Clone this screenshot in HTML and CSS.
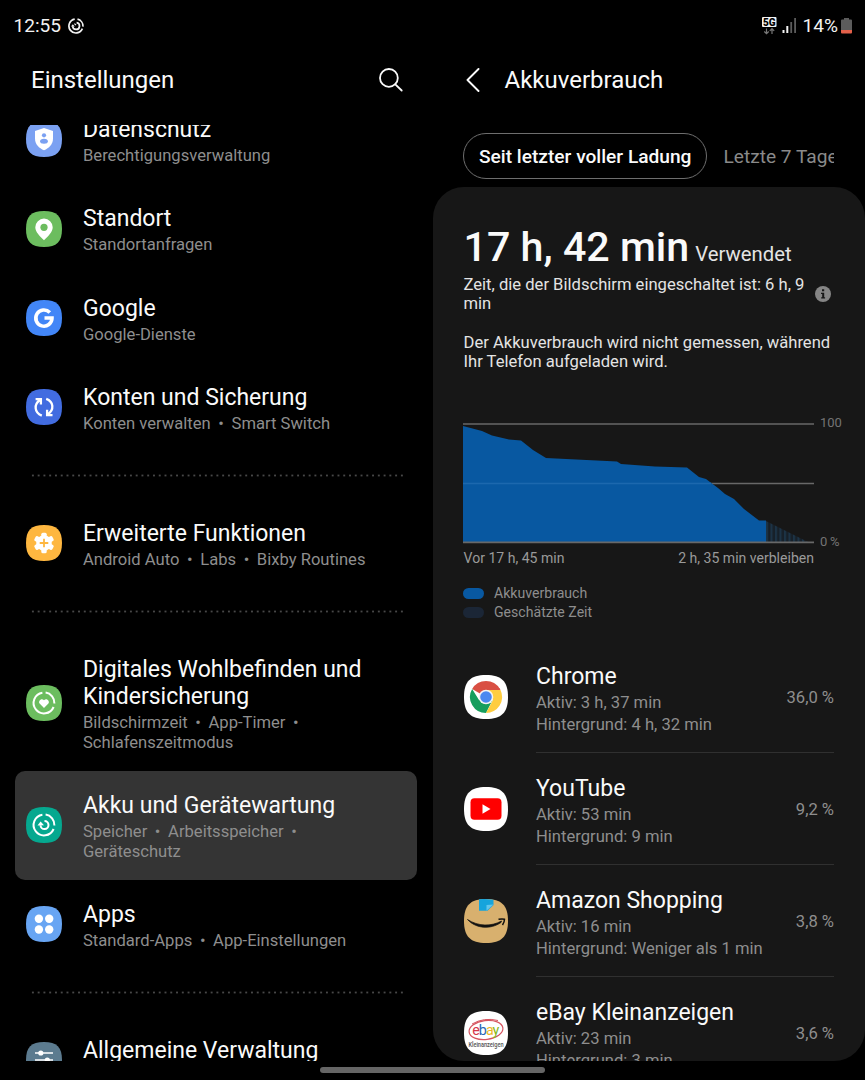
FILE: index.html
```html
<!DOCTYPE html>
<html lang="de">
<head>
    <meta charset="UTF-8">
    <meta name="viewport" content="width=device-width, initial-scale=1.0">
    <title>Einstellungen</title>
    <link rel="stylesheet" href="styles.css">
</head>
<body>
    <!-- Shared icon background -->
    <svg class="defs" width="0" height="0">
        <symbol id="squircle" viewBox="0 0 36 36">
            <path d="M18 0C30.800 0 36 5.200 36 18S30.800 36 18 36 0 30.800 0 18 5.200 0 18 0Z"/>
        </symbol>
    </svg>

    <div class="status-bar">
        <div class="status-left">
            <span>12:55</span>
            <svg width="16" height="16" viewBox="0 0 16 16" fill="none" stroke="#f2f2f2" stroke-width="1.700">
                <path d="M9.500 1.200A7 7 0 0 1 14.900 8.600M14.400 10.700A7 7 0 1 1 6.700 1.100"/>
                <path d="M8.600 4.700A3.400 3.400 0 1 1 4.700 8.200"/>
                <path d="M3 8.600L4.800 6.300 6.800 8.500Z" fill="#f2f2f2" stroke="none"/>
                <path d="M6.400 5.600L8 7.200" stroke-width="1.200"/>
            </svg>
        </div>
        <div class="status-right">
            <svg width="15" height="18" viewBox="0 0 15 18">
                <rect width="14.500" height="10" rx="1" fill="#f2f2f2"/>
                <text x="7.300" y="8.600" text-anchor="middle" class="net-label">5G</text>
                <path d="M4.500 11.500v5M2.300 14.500l2.200 2.200 2.200-2.200M10 17v-5M7.800 13.900L10 11.700l2.200 2.200" fill="none" stroke="#777" stroke-width="1.200"/>
            </svg>
            <svg width="15" height="16" viewBox="0 0 15 16">
                <rect x="0.500" y="12" width="2" height="3" fill="#f2f2f2"/>
                <rect x="4.300" y="8" width="2" height="7" fill="#f2f2f2"/>
                <rect x="8.300" y="4" width="1.800" height="11" fill="#5c5c5c"/>
                <rect x="12.200" y="0" width="1.800" height="15" fill="#5c5c5c"/>
            </svg>
            <span class="percent">14%</span>
            <svg width="11" height="16" viewBox="0 0 11 16">
                <path d="M3 0h5v1.500h2q1 0 1 1V12H0V2.500q0-1 1-1h2Z" fill="#5c5c5c"/>
                <path d="M0 12h11v2.500q0 1-1 1H1q-1 0-1-1Z" fill="#e2604a"/>
            </svg>
        </div>
    </div>

    <div class="panes">
        <div class="settings">
            <header class="settings-header">
                <h1>Einstellungen</h1>
                <svg width="24" height="24" viewBox="0 0 24 24" fill="none" stroke="#fafafa" stroke-width="1.800" stroke-linecap="round">
                    <circle cx="9.900" cy="9.900" r="8.900"/>
                    <path d="M16.300 16.300L22.700 22.500"/>
                </svg>
            </header>

            <div class="settings-list">
                <div class="item first">
                    <svg class="icon" viewBox="0 0 36 36">
                        <use href="#squircle" fill="#7ba1f2"/>
                        <path d="M18 7L27 10V17.500C27 23.500 23 27 18 29.300 13 27 9 23.500 9 17.500V10Z" fill="#fff"/>
                        <circle cx="18" cy="14.300" r="2.100" fill="#7ba1f2"/>
                        <ellipse cx="18" cy="20.300" rx="3.900" ry="2.500" fill="#7ba1f2"/>
                    </svg>
                    <div class="text">
                        <div class="title">Datenschutz</div>
                        <div class="sub">Berechtigungsverwaltung</div>
                    </div>
                </div>
                <div class="item">
                    <svg class="icon" viewBox="0 0 36 36">
                        <use href="#squircle" fill="#6cbd5f"/>
                        <path d="M18 7.600A8.700 8.700 0 0 1 26.700 16.300C26.700 21 22 25.500 18 29.300 14 25.500 9.300 21 9.300 16.300A8.700 8.700 0 0 1 18 7.600Z" fill="#fff"/>
                        <circle cx="18" cy="16.300" r="3.600" fill="#6cbd5f"/>
                    </svg>
                    <div class="text">
                        <div class="title">Standort</div>
                        <div class="sub">Standortanfragen</div>
                    </div>
                </div>
                <div class="item">
                    <svg class="icon" viewBox="0 0 36 36">
                        <use href="#squircle" fill="#4286f7"/>
                        <path d="M23.800 12.500A8.100 8.100 0 1 0 26 18H18.500" fill="none" stroke="#fff" stroke-width="3.600"/>
                    </svg>
                    <div class="text">
                        <div class="title">Google</div>
                        <div class="sub">Google-Dienste</div>
                    </div>
                </div>
                <div class="item">
                    <svg class="icon" viewBox="0 0 36 36">
                        <use href="#squircle" fill="#426ce0"/>
                        <g fill="none" stroke="#fff" stroke-width="2.300">
                            <path d="M15.800 26.600C8.500 23.500 7.200 15.500 14.600 10.500M9.600 10.100H14.900V15.400"/>
                            <path d="M20.200 9.800C27.500 12.500 28.800 20.500 21.400 25.700M26.500 26.100H21.100V20.700"/>
                        </g>
                    </svg>
                    <div class="text">
                        <div class="title">Konten und Sicherung</div>
                        <div class="sub">Konten verwalten<i>•</i>Smart Switch</div>
                    </div>
                </div>
                <div class="divider"></div>
                <div class="item">
                    <svg class="icon" viewBox="0 0 36 36">
                        <use href="#squircle" fill="#feb740"/>
                        <g fill="#fff">
                            <circle cx="18" cy="18" r="7.800"/>
                            <rect x="15.300" y="7.700" width="5.400" height="20.600" rx="1.500"/>
                            <rect x="15.300" y="7.700" width="5.400" height="20.600" rx="1.500" transform="rotate(60 18 18)"/>
                            <rect x="15.300" y="7.700" width="5.400" height="20.600" rx="1.500" transform="rotate(120 18 18)"/>
                        </g>
                        <path d="M18 13.700v8.600M13.700 18h8.600" stroke="#feb740" stroke-width="1.800"/>
                    </svg>
                    <div class="text">
                        <div class="title">Erweiterte Funktionen</div>
                        <div class="sub">Android Auto<i>•</i>Labs<i>•</i>Bixby Routines</div>
                    </div>
                </div>
                <div class="divider"></div>
                <div class="item">
                    <svg class="icon" viewBox="0 0 36 36">
                        <use href="#squircle" fill="#6cbd5f"/>
                        <path d="M19.600 7.600A10.400 10.400 0 0 1 28.400 18.500M27.600 22A10.400 10.400 0 1 1 16.400 7.700" fill="none" stroke="#fff" stroke-width="2"/>
                        <path d="M18 23L13.600 18.600C11.800 16.500 15.300 12.300 18 15.300 20.700 12.300 24.200 16.500 22.400 18.600Z" fill="#fff"/>
                    </svg>
                    <div class="text">
                        <div class="title">Digitales Wohlbefinden und<br>Kindersicherung</div>
                        <div class="sub">Bildschirmzeit<i>•</i>App-Timer<i>•</i><br>Schlafenszeitmodus</div>
                    </div>
                </div>
                <div class="item active">
                    <svg class="icon" viewBox="0 0 36 36">
                        <use href="#squircle" fill="#05a88f"/>
                        <g fill="none" stroke="#fff" stroke-width="2">
                            <path d="M19.600 7.600A10.400 10.400 0 0 1 28.400 18.500M27.600 22A10.400 10.400 0 1 1 16.400 7.700"/>
                            <path d="M18.500 14A4 4 0 1 1 14.500 18.200"/>
                        </g>
                        <path d="M11.500 18.600L14.600 14.500 18 18.200Z" fill="#fff"/>
                    </svg>
                    <div class="text">
                        <div class="title">Akku und Gerätewartung</div>
                        <div class="sub">Speicher<i>•</i>Arbeitsspeicher<i>•</i><br>Geräteschutz</div>
                    </div>
                </div>
                <div class="item">
                    <svg class="icon" viewBox="0 0 36 36">
                        <use href="#squircle" fill="#68a5f3"/>
                        <g fill="#fff">
                            <circle cx="12.900" cy="12.800" r="4.200"/>
                            <circle cx="23.200" cy="12.800" r="4.200"/>
                            <circle cx="12.900" cy="23.500" r="4.200"/>
                            <circle cx="23.200" cy="23.500" r="4.200"/>
                        </g>
                    </svg>
                    <div class="text">
                        <div class="title">Apps</div>
                        <div class="sub">Standard-Apps<i>•</i>App-Einstellungen</div>
                    </div>
                </div>
                <div class="divider"></div>
                <div class="item last">
                    <svg class="icon" viewBox="0 0 36 36">
                        <use href="#squircle" fill="#5c7b8f"/>
                        <path d="M9 11h18M9 18h18M9 25h18" stroke="#fff" stroke-width="1.700"/>
                        <g fill="#fff">
                            <circle cx="14.800" cy="11" r="2.600"/>
                            <circle cx="21.300" cy="18" r="2.600"/>
                            <circle cx="14.800" cy="25" r="2.600"/>
                        </g>
                    </svg>
                    <div class="text">
                        <div class="title">Allgemeine Verwaltung</div>
                    </div>
                </div>
            </div>
        </div>

        <div class="detail">
            <header class="detail-header">
                <svg width="14" height="24" viewBox="0 0 14 24" fill="none" stroke="#fafafa" stroke-width="1.900" stroke-linecap="round" stroke-linejoin="round">
                    <path d="M12.500 1L1.500 12 12.500 23"/>
                </svg>
                <h1>Akkuverbrauch</h1>
            </header>

            <div class="tabs">
                <div class="tab selected">Seit letzter voller Ladung</div>
                <div class="tab">Letzte 7 Tage</div>
            </div>

            <div class="card">
                <div class="used"><b>17 h, 42 min</b><span>Verwendet</span></div>
                <div class="screen-time">
                    <p>Zeit, die der Bildschirm eingeschaltet ist: 6 h, 9<br>min</p>
                    <svg width="16" height="16" viewBox="0 0 16 16">
                        <circle cx="8" cy="8" r="8" fill="#858585"/>
                        <path d="M7 3.300h2.200v2H7ZM6 6.700h3.200v4.600h.9v1.300H6.200v-1.300H7.200V8H6Z" fill="#171717"/>
                    </svg>
                </div>
                <p class="note">Der Akkuverbrauch wird nicht gemessen, während<br>Ihr Telefon aufgeladen wird.</p>

                <div class="chart">
                    <svg width="351" height="121" viewBox="0 0 351 121">
                        <defs>
                            <pattern id="stripes" width="4.500" height="8" patternUnits="userSpaceOnUse" x="303">
                                <rect width="4.500" height="8" fill="#172029"/>
                                <rect width="2" height="8" fill="#1c3346"/>
                            </pattern>
                        </defs>
                        <path d="M0 1H351M0 60.500H351" stroke="#686868" stroke-width="1.700"/>
                        <path d="M0 3L19 8 29 12.500 46 16.500 58 17.500 70 27 83 35 154 38.500 158 41 192 43.500 224 44.500 236 54 243 56 255 65 262 71 271 76 281 86 296 97.500H303V119H0Z" fill="#0858a1"/>
                        <path d="M0 60.500H248" stroke="#1c68ae" stroke-width="1.700"/>
                        <path d="M303 98L345 119H303Z" fill="url(#stripes)"/>
                        <path d="M0 119.300H351" stroke="#686868" stroke-width="1.700"/>
                    </svg>
                    <div class="scale"><span>100</span><span>0&#8201;%</span></div>
                </div>
                <div class="range"><span>Vor 17 h, 45 min</span><span>2 h, 35 min verbleiben</span></div>
                <div class="legend"><span class="swatch used-color"></span>Akkuverbrauch</div>
                <div class="legend"><span class="swatch estimate-color"></span>Geschätzte Zeit</div>

                <div class="apps">
                    <div class="app">
                        <svg class="app-icon" viewBox="0 0 44 44">
                            <use href="#squircle" fill="#fff"/>
                            <path d="M22 22L8.140 14A16 16 0 0 1 35.860 14Z" fill="#d94f43"/>
                            <path d="M8.140 14A16 16 0 0 0 22 38L28.500 25 15 25Z" fill="#169e5d"/>
                            <path d="M22 38A16 16 0 0 0 36.500 15H22L29 25Z" fill="#fecd40"/>
                            <path d="M22 15H36.500L35.300 13H22Z" fill="#d94f43"/>
                            <circle cx="22" cy="22" r="7.300" fill="#f4f4f4"/>
                            <circle cx="22" cy="22" r="5.800" fill="#4a88f0"/>
                        </svg>
                        <div class="app-body">
                            <div class="app-info">
                                <div class="title">Chrome</div>
                                <div class="app-time">Aktiv: 3 h, 37 min<br>Hintergrund: 4 h, 32 min</div>
                            </div>
                            <div class="app-percent">36,0 %</div>
                        </div>
                    </div>
                    <div class="app">
                        <svg class="app-icon" viewBox="0 0 44 44">
                            <use href="#squircle" fill="#fff"/>
                            <rect x="6.500" y="11.200" width="31" height="21.600" rx="4" fill="#f00"/>
                            <path d="M18.500 17.300L26.500 22 18.500 26.700Z" fill="#fff"/>
                        </svg>
                        <div class="app-body">
                            <div class="app-info">
                                <div class="title">YouTube</div>
                                <div class="app-time">Aktiv: 53 min<br>Hintergrund: 9 min</div>
                            </div>
                            <div class="app-percent">9,2 %</div>
                        </div>
                    </div>
                    <div class="app">
                        <svg class="app-icon" viewBox="0 0 44 44">
                            <use href="#squircle" fill="#d8b06e"/>
                            <path d="M15 .3Q22-.2 29.500.7V6L23.500 11.800H15Z" fill="#16a4dc"/>
                            <path d="M22.500 11.800V6L29.500 5.500Z" fill="#63c6ec"/>
                            <path d="M3.500 20.500C14 27.300 27 27.800 37.500 22L37 23.500C27 30.500 12 30 3.500 20.500Z" fill="#111" stroke="#111" stroke-width=".7" stroke-linejoin="round"/>
                            <path d="M34.500 20.300Q38.500 19.700 40.500 20.300 40.500 23 38.500 26" fill="none" stroke="#111" stroke-width="1.500"/>
                        </svg>
                        <div class="app-body">
                            <div class="app-info">
                                <div class="title">Amazon Shopping</div>
                                <div class="app-time">Aktiv: 16 min<br>Hintergrund: Weniger als 1 min</div>
                            </div>
                            <div class="app-percent">3,8 %</div>
                        </div>
                    </div>
                    <div class="app">
                        <svg class="app-icon" viewBox="0 0 44 44">
                            <use href="#squircle" fill="#fff"/>
                            <ellipse cx="22" cy="19" rx="17" ry="9.500" fill="none" stroke="#d65560" stroke-width="1.200" transform="rotate(-7 22 19)"/>
                            <path d="M8 13Q20 6 34 9.500" fill="none" stroke="#d65560" stroke-width="1"/>
                            <text x="8.300" y="24" class="ebay" textLength="26" lengthAdjust="spacingAndGlyphs"><tspan fill="#d6364a">e</tspan><tspan fill="#2867b5">b</tspan><tspan fill="#efb71e">a</tspan><tspan fill="#86b817">y</tspan></text>
                            <text x="4.500" y="36" class="ebay-sub" textLength="35" lengthAdjust="spacingAndGlyphs">Kleinanzeigen</text>
                        </svg>
                        <div class="app-body">
                            <div class="app-info">
                                <div class="title">eBay Kleinanzeigen</div>
                                <div class="app-time">Aktiv: 23 min<br>Hintergrund: 3 min</div>
                            </div>
                            <div class="app-percent">3,6 %</div>
                        </div>
                    </div>
                </div>
            </div>
        </div>
    </div>

    <div class="nav-handle"></div>
</body>
</html>
```
FILE: styles.css
```css
* {
    box-sizing: border-box;
}

body {
    margin: 0;
    width: 865px;
    height: 1080px;
    overflow: hidden;
    background: #000;
    color: #fafafa;
    font-family: Roboto, sans-serif;
}

h1, p {
    margin: 0;
    font-weight: normal;
}

svg {
    display: block;
    flex-shrink: 0;
}

.defs {
    position: absolute;
}

/* Status bar */
.status-bar {
    display: flex;
    justify-content: space-between;
    height: 51px;
    padding: 0 13px 0 13.5px;
    font-size: 19.1px;
    color: #f2f2f2;
}

.status-left, .status-right {
    display: flex;
    align-items: center;
}

.status-left {
    gap: 7px;
}

.percent {
    margin: 0 3px 0 6px;
}

.status-right svg:nth-child(2) {
    margin-left: 5px;
}

.net-label {
    font-size: 10px;
    font-weight: 900;
    fill: #000;
}

.panes {
    display: flex;
    height: 1010px;
}

.settings {
    width: 433px;
    display: flex;
    flex-direction: column;
}

h1 {
    font-size: 24px;
    line-height: 28px;
}

.settings-header {
    display: flex;
    justify-content: space-between;
    align-items: center;
    height: 74px;
    flex-shrink: 0;
    padding: 0 30px 16px 31px;
}

/* Left list */
.settings-list {
    flex: 1;
    overflow: hidden;
    padding: 0 16px 0 15px;
}

.item {
    display: flex;
    align-items: center;
    padding: 21.45px 11px;
}

.item.first {
    margin-top: -30.5px;
}

.item.last {
    align-items: flex-start;
}

.item.last .icon {
    margin-top: 5px;
}

.item.active {
    background: #343434;
    border-radius: 10px;
}

.icon {
    width: 36px;
    height: 36px;
    margin-right: 21px;
}

.title {
    font-size: 23px;
    line-height: 27px;
    white-space: nowrap;
}

.sub {
    margin: 3px 0 -3px;
    font-size: 16.6px;
    line-height: 19.5px;
    color: #8e8e8e;
    white-space: nowrap;
}

.sub i {
    font-style: normal;
    margin: 0 7.6px;
}

.divider {
    height: 46.8px;
    margin: 0 13px 0 14.5px;
    background: radial-gradient(circle, #484848 0.8px, transparent 1.3px) 0 0 / 5.78px 46.8px repeat-x;
}

/* Right side */
.detail {
    width: 432px;
    display: flex;
    flex-direction: column;
}

.detail-header {
    display: flex;
    align-items: center;
    gap: 25px;
    height: 74px;
    padding: 0 33px 16px 32.5px;
}

.tabs {
    display: flex;
    align-items: center;
    height: 62px;
    margin: 0 31px 0 30px;
    overflow: hidden;
    flex-shrink: 0;
    font-size: 19.15px;
}

.tab {
    color: #8a8a8a;
    padding-left: 16px;
    white-space: nowrap;
}

.tab.selected {
    height: 46px;
    padding: 0 15px;
    border: 1.5px solid #6e6e6e;
    border-radius: 23px;
    color: #fafafa;
    font-weight: 500;
    line-height: 45px;
}

.card {
    flex: 1;
    overflow: hidden;
    padding: 35px 31px 0 30.5px;
    background: #171717;
    border-radius: 31px;
    white-space: nowrap;
}

.used {
    height: 52.5px;
    line-height: 50px;
}

.used b {
    font-size: 41.2px;
    font-weight: 500;
}

.used span {
    margin-left: 6px;
    font-size: 20.3px;
    color: #e4e4e4;
}

.screen-time {
    display: flex;
    justify-content: space-between;
    align-items: center;
    padding-right: 3px;
}

.screen-time p, .note {
    font-size: 16.6px;
    line-height: 19.5px;
    color: #e4e4e4;
}

.note {
    margin-top: 19px;
}

.chart {
    display: flex;
    margin: 51.5px -31px 0 -0.5px;
}

.scale {
    display: flex;
    flex-direction: column;
    justify-content: space-between;
    margin: -8px 0 -6px 6px;
    font-size: 13px;
    line-height: 16px;
    color: #747474;
}

.range {
    display: flex;
    justify-content: space-between;
    margin: 6px 20px 16.5px 0;
    font-size: 14.05px;
    line-height: 17px;
    color: #9a9a9a;
}

.legend {
    display: flex;
    align-items: center;
    font-size: 14.1px;
    line-height: 19.2px;
    color: #8e8e8e;
}

.swatch {
    width: 21px;
    height: 11px;
    margin: 0 10px 0 -0.5px;
    border-radius: 6px;
}

.used-color {
    background: #0858a1;
}

.estimate-color {
    background: #1b2636;
}

/* App usage */
.apps {
    margin-top: 19px;
}

.app {
    display: flex;
    height: 112px;
    align-items: center;
}

.app-icon {
    width: 44px;
    height: 44px;
    margin: 0 28px 0 0.5px;
}

.app-body {
    display: flex;
    flex: 1;
    height: 112px;
    justify-content: space-between;
    align-items: center;
    border-bottom: 1.5px solid #303030;
}

.app-info {
    padding-top: 7px;
}

.app-time, .app-percent {
    font-size: 16.6px;
    line-height: 22.5px;
    color: #8e8e8e;
}

.app-time {
    margin-top: 2px;
}

.app-percent {
    padding-top: 4px;
}

.ebay {
    font-size: 14px;
    letter-spacing: -1px;
}

.ebay-sub {
    font-size: 6.5px;
    font-weight: 500;
    fill: #555;
}

.nav-handle {
    position: absolute;
    left: 320px;
    top: 1067px;
    width: 225px;
    height: 6px;
    border-radius: 3px;
    background: #666;
}
```
